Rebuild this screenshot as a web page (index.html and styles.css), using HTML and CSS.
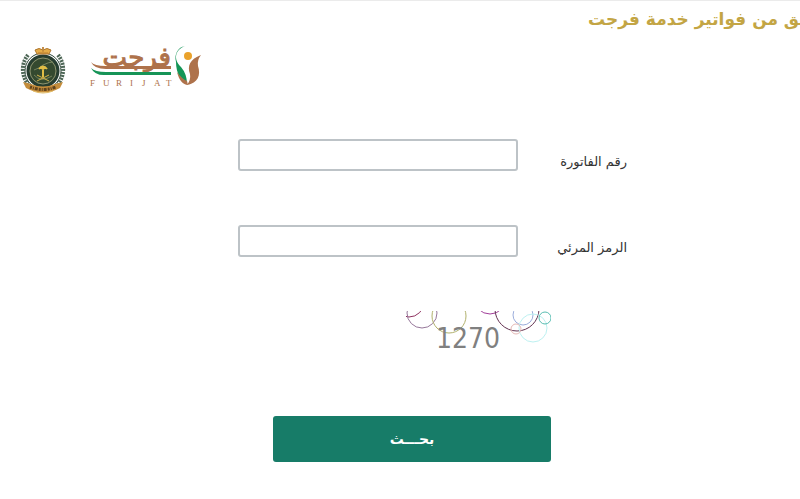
FILE: index.html
```
<!DOCTYPE html>
<html lang="ar">
<head>
    <meta charset="UTF-8">
    <meta name="viewport" content="width=device-width, initial-scale=1.0">
    <title>التحقق من فواتير خدمة فرجت</title>
    <link rel="stylesheet" href="styles.css">
</head>
<body>

    <header class="page-header">
        <h1 class="page-title">التحقق من فواتير خدمة فرجت</h1>
        <div class="logos">
            <!-- Emblem -->
            <svg class="emblem" viewBox="0 0 48 50" role="img" aria-label="شعار">
                <path d="M9 9A23 23 0 0 0 9 38" fill="none" stroke="#4d6656" stroke-width="4" stroke-dasharray="2 1"/>
                <path d="M39 9A23 23 0 0 1 39 38" fill="none" stroke="#4d6656" stroke-width="4" stroke-dasharray="2 1"/>
                <circle cx="24" cy="25" r="18" fill="#fff" stroke="#31493b" stroke-width="1"/>
                <circle cx="24" cy="25" r="15" fill="#34492f" stroke="#263d30" stroke-width="3"/>
                <circle cx="24" cy="25" r="13" fill="none" stroke="#8d9370" stroke-width="1"/>
                <path d="M15 24Q21 22 24 19Q30 16 34 16M15 29Q22 37 33 30" fill="none" stroke="#76845f" stroke-width="1"/>
                <path d="M24 20V31M20 23Q24 18 28 23M21 21L24 23L27 21" fill="none" stroke="#e0bd45" stroke-width="2"/>
                <path d="M18 29L30 35M30 29L18 35" stroke="#d8b74a" stroke-width="1"/>
                <path d="M18 8L16 4Q20 1 24 4Q28 1 32 4L30 8Z" fill="#e5ac47" stroke="#ae752c" stroke-width="1"/>
                <path d="M19 7H29M24 1V6" stroke="#b67c32" stroke-width="1"/>
                <circle cx="24" cy="2" r="1" fill="#bd8133"/>
                <path d="M4 36L12 38Q24 43 36 38L44 36L41 42Q24 51 7 42Z" fill="#c58d3b"/>
                <path d="M11 41Q24 46 37 41" fill="none" stroke="#5f431d" stroke-width="3" stroke-dasharray="2 1 1 1 3 1"/>
                <path d="M14 45Q24 49 34 45" fill="none" stroke="#e2bd69" stroke-width="1"/>
            </svg>
            <!-- Furijat logo -->
            <svg class="brand" viewBox="0 0 124 64" role="img" aria-label="فرجت FURIJAT">
                <text class="brand-arabic" x="88" y="29" direction="rtl">فرجت</text>
                <path d="M8 25Q11 29 23 29H88V32H23Q11 32 8 25Z" fill="#ae724b"/>
                <path d="M8 31Q12 35 23 35H88V38H23Q12 39 8 31Z" fill="#169457"/>
                <text class="brand-latin" x="7 20 33 47 59 71 83" y="49">FURIJAT</text>
                <path d="M102 9C92 13 90 22 98 30Q104 37 104 47C98 44 93 36 93 25C91 17 95 10 102 9Z" fill="#149557"/>
                <path d="M118 18C107 22 104 29 107 37Q108 43 104 48C115 46 118 38 115 29Q114 23 118 18Z" fill="#ae724b"/>
                <path d="M94 35C96 43 100 48 105 48L104 44Q99 42 94 35Z" fill="#ae724b"/>
                <circle cx="105" cy="19" r="4" fill="#eaa22b"/>
            </svg>
        </div>
    </header>

    <form class="search-form" dir="rtl">
        <div class="field">
            <label for="invoiceNumber">رقم الفاتورة</label>
            <input type="text" id="invoiceNumber" name="invoiceNumber">
        </div>
        <div class="field">
            <label for="captchaCode">الرمز المرئي</label>
            <input type="text" id="captchaCode" name="captchaCode" autocomplete="off">
        </div>
        <div class="actions">
            <svg class="captcha" viewBox="0 0 145 50" role="img" aria-label="1270">
                <g fill="none" stroke-width="1">
                    <circle cx="3" cy="-9" r="15" stroke="#8f315f"/>
                    <circle cx="16" cy="2" r="15" stroke="#96779a"/>
                    <circle cx="43" cy="5" r="17" stroke="#b1b16c"/>
                    <circle cx="84" cy="-13" r="16" stroke="#a13e99"/>
                    <circle cx="111" cy="-2" r="22" stroke="#623251"/>
                    <circle cx="117" cy="4" r="10" stroke="#9baddb"/>
                    <circle cx="127" cy="17" r="14" stroke="#bdf1f1"/>
                    <circle cx="110" cy="18" r="5" stroke="#e5b9b5"/>
                    <circle cx="139" cy="7" r="6" stroke="#58bdb2"/>
                </g>
                <text class="captcha-text" x="30" y="37">1270</text>
            </svg>
            <button type="submit" class="search-button">بحـــث</button>
        </div>
    </form>

</body>
</html>
```
FILE: styles.css
```
body {
    font-family: "DejaVu Sans", sans-serif;
    background-color: #fff;
    color: #333;
    margin: 0;
    border-top: 1px solid #ebebeb;
    overflow-x: hidden;
}
.page-header {
    display: flex;
    flex-direction: column;
}
.page-title {
    align-self: flex-end;
    width: 212px;
    margin: 0;
    font-size: 17px;
    font-weight: bold;
    line-height: 36px;
    color: #c3a544;
    white-space: nowrap;
}
.logos {
    display: flex;
    align-items: center;
    gap: 16px;
    padding-left: 19px;
}
.emblem {
    width: 48px;
    height: 50px;
    padding-top: 4px;
}
.brand {
    width: 124px;
    height: 64px;
}
.brand-arabic {
    font-family: "DejaVu Sans", sans-serif;
    font-size: 26px;
    fill: #ae724b;
    stroke: #ae724b;
    stroke-width: 1px;
}
.brand-latin {
    font-family: "Liberation Serif", serif;
    font-size: 9px;
    fill: #ae724b;
}
.search-form {
    max-width: 454px;
    margin: 0 auto;
    padding-top: 38px;
}
.field {
    display: flex;
    align-items: flex-end;
    margin-bottom: 54px;
}
.field label {
    width: 109px;
    font-size: 13px;
    line-height: 18px;
    color: #333;
    white-space: nowrap;
}
.field input {
    box-sizing: border-box;
    flex: 0 1 280px;
    min-width: 0;
    height: 32px;
    padding: 4px 8px;
    border: 2px solid #bdc3c7;
    border-radius: 3px;
    background-color: #fff;
    font-size: 14px;
}
.actions {
    display: flex;
    flex-direction: column;
    align-items: flex-start;
    gap: 55px;
    padding-right: 76px;
}
.captcha {
    width: 145px;
    height: 50px;
    overflow: hidden;
    direction: ltr;
}
.captcha-text {
    font-family: "DejaVu Sans Condensed", "DejaVu Sans", sans-serif;
    font-size: 28px;
    fill: #808080;
}
.search-button {
    width: 278px;
    max-width: 100%;
    height: 46px;
    border: none;
    border-radius: 3px;
    background-color: #177c68;
    color: #fff;
    font-family: "DejaVu Sans", sans-serif;
    font-size: 14px;
    font-weight: bold;
    cursor: pointer;
}
.search-button:hover {
    background-color: #126554;
}
```
